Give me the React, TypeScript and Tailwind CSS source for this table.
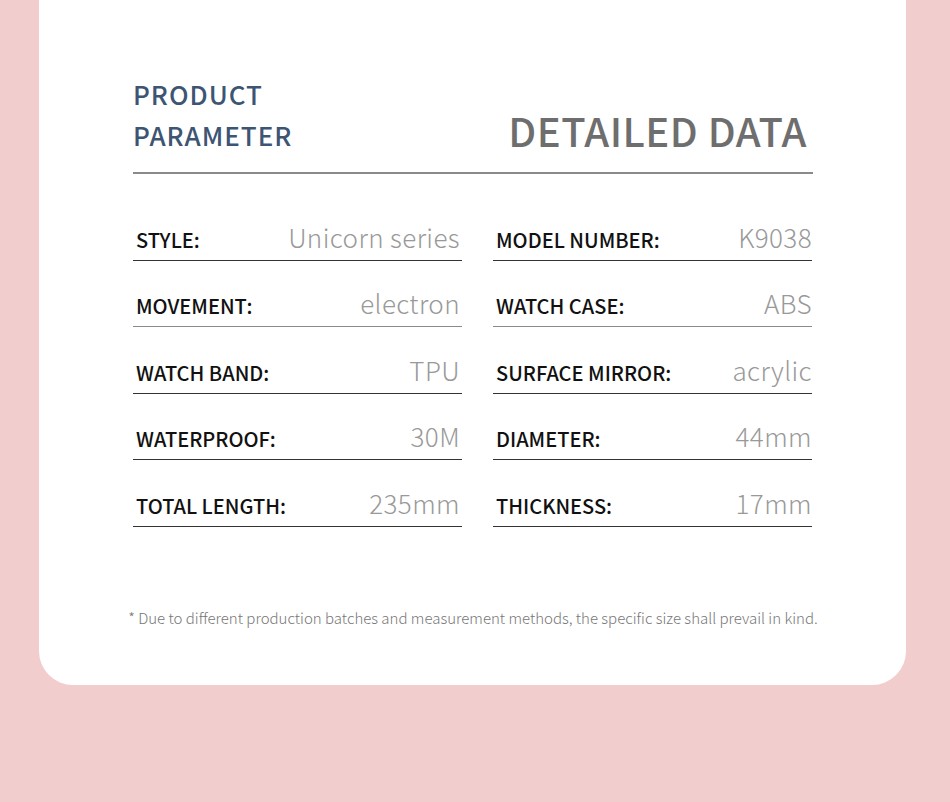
const rows: [string, string, string, string][] = [
  ['STYLE:', 'Unicorn series', 'MODEL NUMBER:', 'K9038'],
  ['MOVEMENT:', 'electron', 'WATCH CASE:', 'ABS'],
  ['WATCH BAND:', 'TPU', 'SURFACE MIRROR:', 'acrylic'],
  ['WATERPROOF:', '30M', 'DIAMETER:', '44mm'],
  ['TOTAL LENGTH:', '235mm', 'THICKNESS:', '17mm'],
];

function Cell({ label, value, line, right }: { label: string; value: string; line: string; right?: boolean }) {
  return (
    <div className={`flex h-[66.5px] flex-col justify-end border-b pb-[10px] pl-[3px] ${right ? 'pr-0' : 'pr-[2px]'} ${line}`}>
      <div className="flex items-baseline justify-between">
        <span className="text-[20px] leading-none font-medium text-[#111]">{label}</span>
        <span className="text-[26px] leading-none font-light tracking-[0.4px] text-[#999]">{value}</span>
      </div>
    </div>
  );
}

export default function App() {
  return (
    <div
      className="h-[802px] w-[950px] overflow-hidden bg-[#f2cdcd]"
      style={{ fontFamily: '"Noto Sans CJK SC", "Noto Sans", sans-serif' }}
    >
      <div className="ml-[39px] flex h-[685px] w-[867px] flex-col rounded-b-[34px] bg-white pl-[94px] pr-[93px] pt-[73px]">
        <div className="flex items-end justify-between">
          <div className="text-[26px] leading-[41px] font-medium tracking-[1px] text-[#3d5573]">
            <div>PRODUCT</div>
            <div>PARAMETER</div>
          </div>
          <div className="mb-[5px] mr-[6px] text-[40px] leading-none font-medium tracking-[0.5px] text-[#6e6e6e]">
            DETAILED DATA
          </div>
        </div>
        <div className="mt-[17px] h-[2px] bg-[#8a8a8a]" />

        <div className="mt-[20px] grid grid-cols-[329px_319px] gap-x-[31px]">
          {rows.map(([l1, v1, l2, v2], i) => {
            const line = i === 1 ? 'border-[#8a8a8a]' : 'border-[#333]';
            return [
              <Cell key={`a${i}`} label={l1} value={v1} line={line} />,
              <Cell key={`b${i}`} label={l2} value={v2} line={line} right />,
            ];
          })}
        </div>

        <p className="-mx-[10px] mt-[83px] text-center text-[15px] leading-none font-light text-[#777]">
          * Due to different production batches and measurement methods, the specific size shall prevail in kind.
        </p>
      </div>
    </div>
  );
}
